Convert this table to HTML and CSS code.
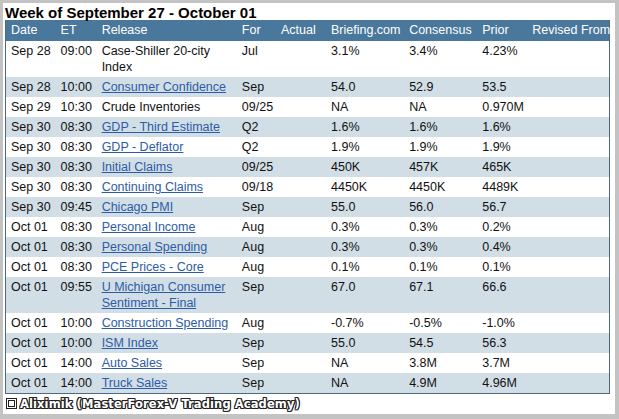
FILE: index.html
```html
<!DOCTYPE html>
<html>
<head>
<meta charset="utf-8">
<link rel="stylesheet" href="styles.css">
</head>
<body>
<div class="panel">
  <div class="title">Week of September 27 - October 01</div>
  <table class="cal">
    <colgroup>
      <col class="c1"><col class="c2"><col class="c3"><col class="c4"><col class="c5"><col class="c6"><col class="c7"><col class="c8"><col class="c9">
    </colgroup>
    <thead>
      <tr><th>Date</th><th>ET</th><th>Release</th><th>For</th><th>Actual</th><th>Briefing.com</th><th>Consensus</th><th>Prior</th><th>Revised From</th></tr>
    </thead>
    <tbody>
      <tr><td>Sep 28</td><td>09:00</td><td>Case-Shiller 20-city Index</td><td>Jul</td><td></td><td>3.1%</td><td>3.4%</td><td>4.23%</td><td></td></tr>
      <tr class="alt"><td>Sep 28</td><td>10:00</td><td><a href="#">Consumer Confidence</a></td><td>Sep</td><td></td><td>54.0</td><td>52.9</td><td>53.5</td><td></td></tr>
      <tr><td>Sep 29</td><td>10:30</td><td>Crude Inventories</td><td>09/25</td><td></td><td>NA</td><td>NA</td><td>0.970M</td><td></td></tr>
      <tr class="alt"><td>Sep 30</td><td>08:30</td><td><a href="#">GDP - Third Estimate</a></td><td>Q2</td><td></td><td>1.6%</td><td>1.6%</td><td>1.6%</td><td></td></tr>
      <tr><td>Sep 30</td><td>08:30</td><td><a href="#">GDP - Deflator</a></td><td>Q2</td><td></td><td>1.9%</td><td>1.9%</td><td>1.9%</td><td></td></tr>
      <tr class="alt"><td>Sep 30</td><td>08:30</td><td><a href="#">Initial Claims</a></td><td>09/25</td><td></td><td>450K</td><td>457K</td><td>465K</td><td></td></tr>
      <tr><td>Sep 30</td><td>08:30</td><td><a href="#">Continuing Claims</a></td><td>09/18</td><td></td><td>4450K</td><td>4450K</td><td>4489K</td><td></td></tr>
      <tr class="alt"><td>Sep 30</td><td>09:45</td><td><a href="#">Chicago PMI</a></td><td>Sep</td><td></td><td>55.0</td><td>56.0</td><td>56.7</td><td></td></tr>
      <tr><td>Oct 01</td><td>08:30</td><td><a href="#">Personal Income</a></td><td>Aug</td><td></td><td>0.3%</td><td>0.3%</td><td>0.2%</td><td></td></tr>
      <tr class="alt"><td>Oct 01</td><td>08:30</td><td><a href="#">Personal Spending</a></td><td>Aug</td><td></td><td>0.3%</td><td>0.3%</td><td>0.4%</td><td></td></tr>
      <tr><td>Oct 01</td><td>08:30</td><td><a href="#">PCE Prices - Core</a></td><td>Aug</td><td></td><td>0.1%</td><td>0.1%</td><td>0.1%</td><td></td></tr>
      <tr class="alt"><td>Oct 01</td><td>09:55</td><td><a href="#">U Michigan Consumer Sentiment - Final</a></td><td>Sep</td><td></td><td>67.0</td><td>67.1</td><td>66.6</td><td></td></tr>
      <tr><td>Oct 01</td><td>10:00</td><td><a href="#">Construction Spending</a></td><td>Aug</td><td></td><td>-0.7%</td><td>-0.5%</td><td>-1.0%</td><td></td></tr>
      <tr class="alt"><td>Oct 01</td><td>10:00</td><td><a href="#">ISM Index</a></td><td>Sep</td><td></td><td>55.0</td><td>54.5</td><td>56.3</td><td></td></tr>
      <tr><td>Oct 01</td><td>14:00</td><td><a href="#">Auto Sales</a></td><td>Sep</td><td></td><td>NA</td><td>3.8M</td><td>3.7M</td><td></td></tr>
      <tr class="alt"><td>Oct 01</td><td>14:00</td><td><a href="#">Truck Sales</a></td><td>Sep</td><td></td><td>NA</td><td>4.9M</td><td>4.96M</td><td></td></tr>
    </tbody>
  </table>
  <div class="footer"><span class="box"></span><span class="brand">Aliximik (MasterForex-V Trading Academy)</span></div>
</div>
</body>
</html>
```

FILE: styles.css
```css
html, body {
  margin: 0;
  padding: 0;
}
body {
  background: #c3c3c3;
  width: 619px;
  height: 419px;
  padding: 3px 4px 0 3px;
  box-sizing: border-box;
  font-family: "Liberation Sans", Arial, sans-serif;
}
.panel {
  background: #ffffff;
  height: 411px;
  padding: 2px 0 0 2px;
  box-sizing: border-box;
}
.title {
  font-weight: bold;
  font-size: 15px;
  line-height: 16px;
  height: 15px;
  color: #000;
}
.cal {
  border-collapse: collapse;
  table-layout: fixed;
  width: 605px;
  font-size: 12.5px;
  color: #111;
  border: 1px solid #4d6a82;
  border-top: none;
}
.c1 { width: 50px; }
.c2 { width: 41px; }
.c3 { width: 140px; }
.c4 { width: 39px; }
.c5 { width: 50px; }
.c6 { width: 78px; }
.c7 { width: 73px; }
.c8 { width: 50px; }
.c9 { width: 82px; }
.cal th {
  background: #4a779c;
  color: #ffffff;
  font-weight: normal;
  text-align: left;
  height: 21px;
  padding: 0 0 0 5px;
  line-height: 21px;
  white-space: nowrap;
}
.cal td {
  vertical-align: top;
  padding: 2px 2px 2px 5px;
  line-height: 16px;
  text-align: left;
}
.cal tr.alt td {
  background: #d2dee6;
}
.cal a {
  color: #2d5ca6;
  text-decoration: underline;
}
.footer {
  display: flex;
  align-items: center;
  height: 19px;
  gap: 3px;
}
.box {
  width: 9px;
  height: 9px;
  border: 1px solid #222;
  box-shadow: inset 0 0 0 1px #fff, inset 0 0 0 2px #222;
  margin-left: 1px;
}
.brand {
  font-family: "DejaVu Sans", sans-serif;
  font-weight: bold;
  font-size: 11.5px;
  color: #ffffff;
  letter-spacing: 0.1px;
  text-shadow: -1px 0 #222, 1px 0 #222, 0 -1px #222, 0 1px #222, -1px -1px #222, 1px 1px #222, -1px 1px #222, 1px -1px #222;
}
```
